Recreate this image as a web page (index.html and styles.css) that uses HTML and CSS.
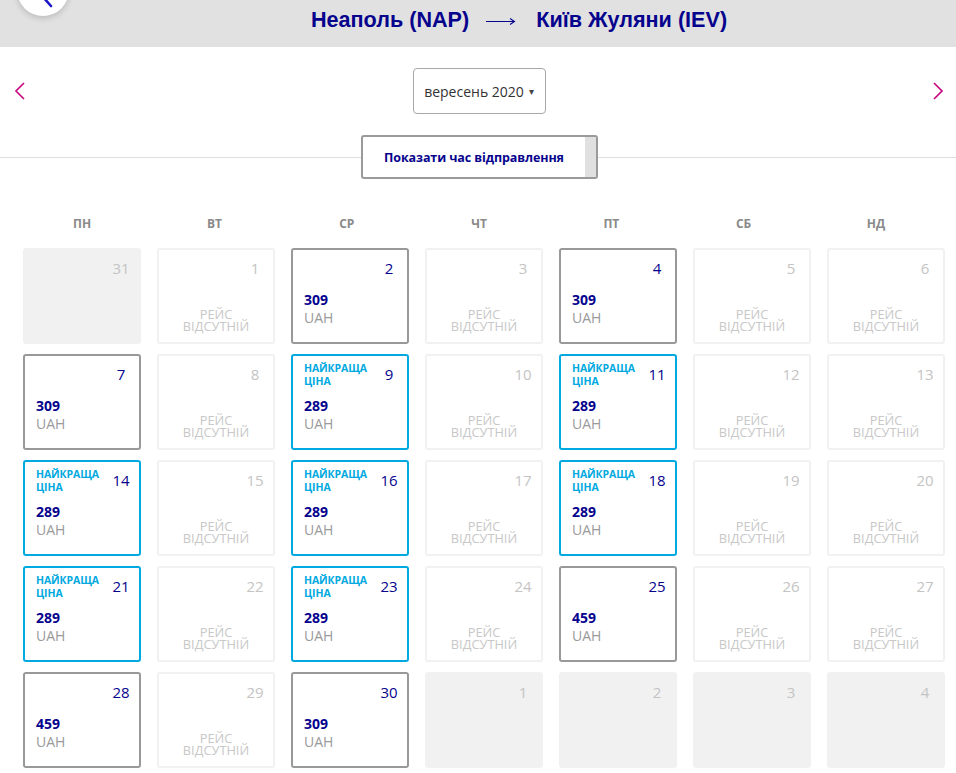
FILE: index.html
```html
<!DOCTYPE html>
<html lang="uk">
<head>
<meta charset="utf-8">
<link rel="stylesheet" href="styles.css">
</head>
<body>
<header class="topbar">
  <div class="back-circle">
    <svg width="52" height="52" viewBox="0 0 52 52"><path d="M26 33 L34 42" stroke="#1a17c9" stroke-width="2.6" fill="none" stroke-linecap="round"/></svg>
  </div>
  <h1 class="route"><span>Неаполь (NAP)</span><svg class="route-arrow" width="30" height="10" viewBox="0 0 30 10"><path d="M0 5.5 H28 M24 2.5 L28.5 5.5 L24 8.5" stroke="#06038d" stroke-width="1.1" fill="none"/></svg><span>Київ Жуляни (IEV)</span></h1>
</header>

<div class="month-nav">
  <svg class="chev" width="12" height="20" viewBox="0 0 12 20"><path d="M10 2 L2 10 L10 18" stroke="#c6007e" stroke-width="1.6" fill="none"/></svg>
  <div class="month-select">вересень 2020 <span class="caret">▾</span></div>
  <svg class="chev" width="12" height="20" viewBox="0 0 12 20"><path d="M2 2 L10 10 L2 18" stroke="#c6007e" stroke-width="1.6" fill="none"/></svg>
</div>

<div class="toggle-row">
  <div class="toggle-btn"><span class="toggle-text">Показати час відправлення</span><span class="toggle-knob"></span></div>
</div>

<div class="weekdays">
  <div>ПН</div><div>ВТ</div><div>СР</div><div>ЧТ</div><div>ПТ</div><div>СБ</div><div>НД</div>
</div>

<div class="calendar">
  <div class="cell out"><div class="top"><span class="num">31</span></div></div>
  <div class="cell none"><div class="top"><span class="num">1</span></div><div class="nf">Рейс<br>відсутній</div></div>
  <div class="cell avail"><div class="top"><span class="num">2</span></div><div class="price">309</div><div class="cur">UAH</div></div>
  <div class="cell none"><div class="top"><span class="num">3</span></div><div class="nf">Рейс<br>відсутній</div></div>
  <div class="cell avail"><div class="top"><span class="num">4</span></div><div class="price">309</div><div class="cur">UAH</div></div>
  <div class="cell none"><div class="top"><span class="num">5</span></div><div class="nf">Рейс<br>відсутній</div></div>
  <div class="cell none"><div class="top"><span class="num">6</span></div><div class="nf">Рейс<br>відсутній</div></div>

  <div class="cell avail"><div class="top"><span class="num">7</span></div><div class="price">309</div><div class="cur">UAH</div></div>
  <div class="cell none"><div class="top"><span class="num">8</span></div><div class="nf">Рейс<br>відсутній</div></div>
  <div class="cell best"><div class="top"><span class="label">Найкраща ціна</span><span class="num">9</span></div><div class="price">289</div><div class="cur">UAH</div></div>
  <div class="cell none"><div class="top"><span class="num">10</span></div><div class="nf">Рейс<br>відсутній</div></div>
  <div class="cell best"><div class="top"><span class="label">Найкраща ціна</span><span class="num">11</span></div><div class="price">289</div><div class="cur">UAH</div></div>
  <div class="cell none"><div class="top"><span class="num">12</span></div><div class="nf">Рейс<br>відсутній</div></div>
  <div class="cell none"><div class="top"><span class="num">13</span></div><div class="nf">Рейс<br>відсутній</div></div>

  <div class="cell best"><div class="top"><span class="label">Найкраща ціна</span><span class="num">14</span></div><div class="price">289</div><div class="cur">UAH</div></div>
  <div class="cell none"><div class="top"><span class="num">15</span></div><div class="nf">Рейс<br>відсутній</div></div>
  <div class="cell best"><div class="top"><span class="label">Найкраща ціна</span><span class="num">16</span></div><div class="price">289</div><div class="cur">UAH</div></div>
  <div class="cell none"><div class="top"><span class="num">17</span></div><div class="nf">Рейс<br>відсутній</div></div>
  <div class="cell best"><div class="top"><span class="label">Найкраща ціна</span><span class="num">18</span></div><div class="price">289</div><div class="cur">UAH</div></div>
  <div class="cell none"><div class="top"><span class="num">19</span></div><div class="nf">Рейс<br>відсутній</div></div>
  <div class="cell none"><div class="top"><span class="num">20</span></div><div class="nf">Рейс<br>відсутній</div></div>

  <div class="cell best"><div class="top"><span class="label">Найкраща ціна</span><span class="num">21</span></div><div class="price">289</div><div class="cur">UAH</div></div>
  <div class="cell none"><div class="top"><span class="num">22</span></div><div class="nf">Рейс<br>відсутній</div></div>
  <div class="cell best"><div class="top"><span class="label">Найкраща ціна</span><span class="num">23</span></div><div class="price">289</div><div class="cur">UAH</div></div>
  <div class="cell none"><div class="top"><span class="num">24</span></div><div class="nf">Рейс<br>відсутній</div></div>
  <div class="cell avail"><div class="top"><span class="num">25</span></div><div class="price">459</div><div class="cur">UAH</div></div>
  <div class="cell none"><div class="top"><span class="num">26</span></div><div class="nf">Рейс<br>відсутній</div></div>
  <div class="cell none"><div class="top"><span class="num">27</span></div><div class="nf">Рейс<br>відсутній</div></div>

  <div class="cell avail"><div class="top"><span class="num">28</span></div><div class="price">459</div><div class="cur">UAH</div></div>
  <div class="cell none"><div class="top"><span class="num">29</span></div><div class="nf">Рейс<br>відсутній</div></div>
  <div class="cell avail"><div class="top"><span class="num">30</span></div><div class="price">309</div><div class="cur">UAH</div></div>
  <div class="cell out"><div class="top"><span class="num">1</span></div></div>
  <div class="cell out"><div class="top"><span class="num">2</span></div></div>
  <div class="cell out"><div class="top"><span class="num">3</span></div></div>
  <div class="cell out"><div class="top"><span class="num">4</span></div></div>
</div>
</body>
</html>
```

FILE: styles.css
```css
* { box-sizing: border-box; }
body {
  margin: 0;
  background: #fff;
  font-family: "Open Sans", "Noto Sans", sans-serif;
  color: #333;
  overflow: hidden;
}
.topbar {
  position: relative;
  height: 47px;
  background: #e1e1e1;
  display: flex;
  justify-content: center;
}
.back-circle {
  position: absolute;
  left: 17px;
  top: -36px;
  width: 52px;
  height: 52px;
  border-radius: 50%;
  background: #fff;
  box-shadow: 0 2px 6px rgba(0,0,0,0.18);
  overflow: hidden;
}
.back-circle svg { display: block; }
.route {
  margin: 0;
  padding-top: 5px;
  padding-left: 82px;
  font-family: "Liberation Sans", Arial, sans-serif;
  font-weight: bold;
  font-size: 21.6px;
  line-height: 30px;
  height: 36px;
  color: #06038d;
  display: flex;
  align-items: flex-start;
}
.route-arrow {
  display: block;
  margin: 11px 20px 0 17px;
}
.month-nav {
  display: flex;
  justify-content: space-between;
  align-items: center;
  padding: 21px 12px 21px 14px;
}
.chev { display: block; }
.month-select {
  width: 133px;
  height: 46px;
  border: 1px solid #a8a8a8;
  border-radius: 4px;
  display: flex;
  align-items: center;
  justify-content: center;
  font-size: 14px;
  color: #333;
  margin-left: 0;
}
.caret { font-size: 10px; margin-left: 5px; color: #444; }
.toggle-row {
  position: relative;
  height: 44px;
  display: flex;
  justify-content: center;
}
.toggle-row::before {
  content: "";
  position: absolute;
  left: 0; right: 0;
  top: 22px;
  border-top: 1px solid #dedede;
}
.toggle-btn {
  position: relative;
  width: 237px;
  height: 44px;
  margin-left: 3px;
  border: 2px solid #9a9a9a;
  border-radius: 3px;
  background: #fff;
  display: flex;
}
.toggle-text {
  flex: 1;
  display: flex;
  align-items: center;
  justify-content: center;
  font-weight: bold;
  font-size: 12.5px;
  color: #06038d;
  letter-spacing: -0.1px;
}
.toggle-knob {
  width: 11px;
  background: #e0e0e0;
}
.weekdays {
  display: grid;
  grid-template-columns: repeat(7, 132.3px);
  padding-left: 16px;
  margin-top: 37px;
  margin-bottom: 16px;
  font-size: 12px;
  font-weight: bold;
  line-height: 16px;
  color: #8a8a8a;
  text-align: center;
}
.calendar {
  display: grid;
  grid-template-columns: repeat(7, 118px);
  grid-auto-rows: 96px;
  column-gap: 16px;
  row-gap: 10px;
  padding-left: 23px;
}
.cell {
  border: 2px solid #f1f1f1;
  border-radius: 3px;
  background: #fff;
  padding: 7px 6px 10px 11px;
  display: flex;
  flex-direction: column;
}
.top {
  height: 22px;
  display: flex;
  justify-content: space-between;
  align-items: flex-start;
}
.num {
  margin-left: auto;
  width: 24px;
  text-align: center;
  font-size: 15px;
  line-height: 22px;
  color: #06038d;
}
.label {
  font-size: 10.5px;
  font-weight: bold;
  line-height: 13px;
  color: #00a9e0;
  text-transform: uppercase;
  width: 70px;
  margin-top: -1px;
  letter-spacing: -0.1px;
}
.price {
  margin-top: 12px;
  font-size: 14px;
  font-weight: bold;
  line-height: 18px;
  color: #06038d;
}
.cur {
  font-size: 14px;
  line-height: 18px;
  color: #9a9a9a;
}
.cell.out { background: #f1f1f1; }
.cell.out .num, .cell.none .num { color: #c4c4c4; }
.cell.avail { border-color: #999; }
.cell.best { border-color: #00a9e0; }
.nf {
  margin-top: auto;
  margin-right: 5px;
  text-align: center;
  text-transform: uppercase;
  font-size: 12.8px;
  line-height: 12px;
  color: #c8c8c8;
}
```
